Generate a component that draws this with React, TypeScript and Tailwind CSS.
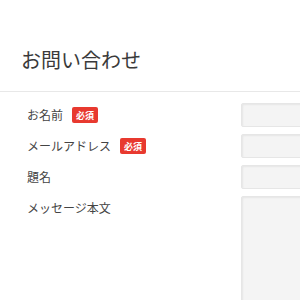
import React from "react";

const font = { fontFamily: '"Noto Sans CJK JP", "Noto Sans", sans-serif' };

function Badge() {
  return (
    <span className="ml-[9px] inline-flex h-[16px] w-[26px] items-center justify-center rounded-[2px] bg-[#e8392f] text-[9px] font-bold leading-none text-white">
      必須
    </span>
  );
}

function Row({ label, required, tall }: { label: string; required?: boolean; tall?: boolean }) {
  return (
    <div className="flex">
      <div className={`flex w-[241px] shrink-0 pl-[27px] ${tall ? "items-start pt-[4px]" : "items-center"}`}>
        <span className="text-[12px] leading-[16px] text-[#444]">{label}</span>
        {required && <Badge />}
      </div>
      <div
        className={`w-[200px] shrink-0 rounded-[2px] border border-[#e6e6e6] bg-[#f4f4f4] shadow-[inset_1px_1px_2px_rgba(0,0,0,0.06)] ${
          tall ? "h-[140px]" : "h-[24px]"
        }`}
      />
    </div>
  );
}

export default function App() {
  return (
    <div className="h-[300px] w-[300px] overflow-hidden bg-white" style={font}>
      <div className="h-[92px] border-b border-[#e8e8e8] pl-[21px] pt-[50px]">
        <h1 className="text-[20px] font-normal leading-[20px] text-[#3a3a3a]">お問い合わせ</h1>
      </div>
      <div className="flex flex-col gap-[7px] pt-[11px]">
        <Row label="お名前" required />
        <Row label="メールアドレス" required />
        <Row label="題名" />
        <Row label="メッセージ本文" tall />
      </div>
    </div>
  );
}
